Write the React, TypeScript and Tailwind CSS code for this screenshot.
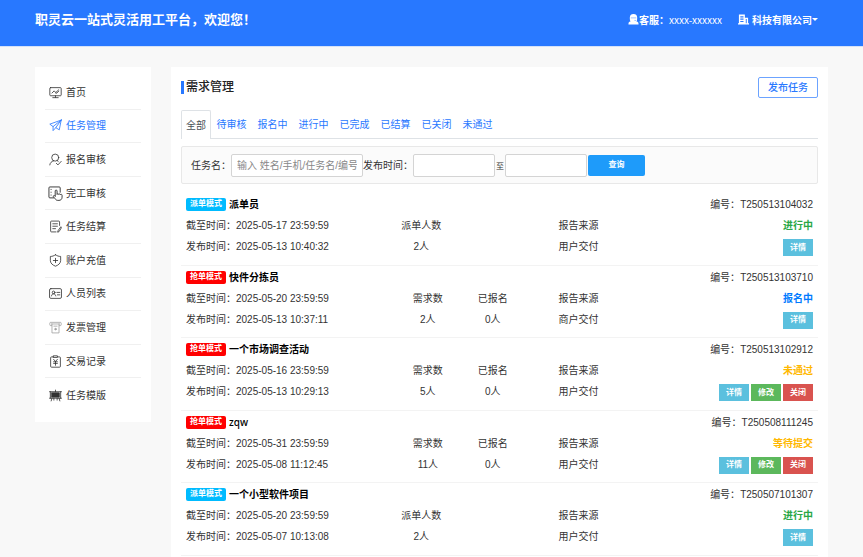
import type { ReactNode } from 'react';

function Icon({ children, className = 'size-[13px]', box = '0 0 24 24' }: { children: ReactNode; className?: string; box?: string }) {
  return (
    <svg
      viewBox={box}
      className={`${className} shrink-0`}
      fill="none"
      stroke="currentColor"
      strokeWidth="1.5"
      strokeLinecap="round"
      strokeLinejoin="round"
      aria-hidden="true"
    >
      {children}
    </svg>
  );
}

const menu: { label: string; active?: boolean; icon: ReactNode }[] = [
  {
    label: '首页',
    icon: (
      <Icon>
        <rect x="1.5" y="3" width="21" height="15" rx="1.5" />
        <path d="M5.5 13l4-4 3 3 5.500-5M12 12.500l2 1 4-4M12 18v3M7 21.500h10" />
      </Icon>
    ),
  },
  {
    label: '任务管理',
    active: true,
    icon: (
      <Icon>
        <path d="M22.500 2L1.500 9.500l6 4.500L22.500 2zM22.500 2l-3.500 18-6.500-4L22.500 2zM7.500 14v7.500l5-5.500" />
      </Icon>
    ),
  },
  {
    label: '报名审核',
    icon: (
      <Icon>
        <circle cx="11.500" cy="8.500" r="6.500" />
        <path d="M8.500 14.500C4.500 15.500 2 18 1.500 22M15 14l2 1.500M13.500 19l3 3 6-6.500" />
      </Icon>
    ),
  },
  {
    label: '完工审核',
    icon: (
      <Icon className="size-[15px]">
        <path d="M9 19H3A1.500 1.500 0 0 1 1.500 17.500V3A1.500 1.500 0 0 1 3 1.500h15A1.500 1.500 0 0 1 19.500 3v7" />
        <path d="M4.500 5.500h1M4.500 10h1M4.500 14.500h1" strokeWidth="1" />
        <path d="M11.500 16V8a1.500 1.500 0 0 1 3 0v5.500c0-1.500 2.700-1.500 2.700 0 0-1.200 2.700-1 2.700.5 0-1.200 2.600-1 2.600.8V18c0 3-2 5-5 5h-2c-2 0-3-1-4-2.500L8.500 17c-.6-1.600 1.500-2.500 3-1z" />
      </Icon>
    ),
  },
  {
    label: '任务结算',
    icon: (
      <Icon>
        <path d="M19.500 10V3.500A1.500 1.500 0 0 0 18 2H4.500A1.500 1.500 0 0 0 3 3.500v17A1.500 1.500 0 0 0 4.500 22H13" />
        <path d="M7 7h8.500M7 11.500h8.500M7 16h5M21.500 13l-5 7-.5 2.500 2.500-1 4-6.500z" />
      </Icon>
    ),
  },
  {
    label: '账户充值',
    icon: (
      <Icon>
        <path d="M12 1.500c3 2 6 3 9.500 3V12c0 5-4 8.500-9.500 10.500C6.500 20.500 2.500 17 2.500 12V4.500c3.500 0 6.500-1 9.500-3zM12 8v8M8 12h8" />
      </Icon>
    ),
  },
  {
    label: '人员列表',
    icon: (
      <Icon>
        <rect x="1" y="3" width="22" height="18" rx="2.500" />
        <circle cx="8.500" cy="10" r="2.500" />
        <path d="M4.500 16.500c.5-2.500 2-4 4-4s3.500 1.500 4 4M14.500 10H20M15.500 14.500H20" />
      </Icon>
    ),
  },
  {
    label: '发票管理',
    icon: (
      <span className="text-neutral-400">
        <Icon>
          <path d="M5 8.500H3A1.500 1.500 0 0 1 1.500 7V4A1.500 1.500 0 0 1 3 2.500h18A1.500 1.500 0 0 1 22.500 4v3A1.500 1.500 0 0 1 21 8.500h-2M4.500 5.500h15M5.500 5.500V22h13V5.500M9 9.500h6" />
          <circle cx="12" cy="15" r="1.500" fill="currentColor" />
        </Icon>
      </span>
    ),
  },
  {
    label: '交易记录',
    icon: (
      <Icon>
        <path d="M8 3.500H4.500A1.500 1.500 0 0 0 3 5v16a1.500 1.500 0 0 0 1.500 1.500h15A1.500 1.500 0 0 0 21 21V5a1.500 1.500 0 0 0-1.500-1.500H16M8.500 1.500h7v3h-7zM8.500 8L12 12l3.500-4M12 12v7M8.500 12.500h7M8.500 15.500h7" />
      </Icon>
    ),
  },
  {
    label: '任务模版',
    icon: (
      <Icon>
        <path d="M1 5h22M1 17h22M2.500 5v12M21.500 5v12M12 2v3M5.500 17L4 22M18.500 17l1.500 5M9 17v3.500M15 17v3.500" />
        <rect x="5" y="7" width="14" height="8" fill="currentColor" />
      </Icon>
    ),
  },
];

const tabs = ['待审核', '报名中', '进行中', '已完成', '已结算', '已关闭', '未通过'];

type Task = {
  mode: 'dispatch' | 'grab';
  title: string;
  deadline: string;
  published: string;
  count: string;
  source: string;
  id: string;
  status: '进行中' | '报名中' | '未通过' | '等待提交';
  editable?: boolean;
};

const tasks: Task[] = [
  { mode: 'dispatch', title: '派单员', deadline: '2025-05-17 23:59:59', published: '2025-05-13 10:40:32', count: '2人', source: '用户交付', id: 'T250513104032', status: '进行中' },
  { mode: 'grab', title: '快件分拣员', deadline: '2025-05-20 23:59:59', published: '2025-05-13 10:37:11', count: '2人', source: '商户交付', id: 'T250513103710', status: '报名中' },
  { mode: 'grab', title: '一个市场调查活动', deadline: '2025-05-16 23:59:59', published: '2025-05-13 10:29:13', count: '5人', source: '用户交付', id: 'T250513102912', status: '未通过', editable: true },
  { mode: 'grab', title: 'zqw', deadline: '2025-05-31 23:59:59', published: '2025-05-08 11:12:45', count: '11人', source: '用户交付', id: 'T250508111245', status: '等待提交', editable: true },
  { mode: 'dispatch', title: '一个小型软件项目', deadline: '2025-05-20 23:59:59', published: '2025-05-07 10:13:08', count: '2人', source: '用户交付', id: 'T250507101307', status: '进行中' },
];

const statusColor = {
  进行中: 'text-[#28a745]',
  报名中: 'text-[#007bff]',
  未通过: 'text-[#ffb800]',
  等待提交: 'text-[#ffb800]',
};

function Action({ label, color }: { label: string; color: string }) {
  return <button type="button" className={`h-[17px] w-[30px] text-[8px] leading-4 font-bold text-white ${color}`}>{label}</button>;
}

function Pair({ label, value, className = '' }: { label: string; value: string; className?: string }) {
  return (
    <dl className={className}>
      <dt>{label}</dt>
      <dd>{value}</dd>
    </dl>
  );
}

function TaskRow({ task }: { task: Task }) {
  const dispatch = task.mode === 'dispatch';
  const latinTitle = /^[a-z]+$/i.test(task.title);
  return (
    <li className="grid grid-cols-[209fr_163fr_254fr] border-b border-[#f3f3f3] px-[5px] pt-px leading-[21px]">
      <div className="whitespace-nowrap">
        <div className="flex h-[21px] items-center gap-[3px]">
          <span className={`h-[13px] w-[40px] rounded-xs text-center text-[8px] leading-3 font-bold text-white ${dispatch ? 'bg-[#0bf]' : 'bg-[#f00]'}`}>
            {dispatch ? '派单模式' : '抢单模式'}
          </span>
          <h3 className={`text-black ${latinTitle ? "font-['Noto_Sans',sans-serif] font-medium" : 'font-bold'}`}>{task.title}</h3>
        </div>
        <p>截至时间：{task.deadline}</p>
        <p>发布时间：{task.published}</p>
      </div>
      <div className="flex pt-[21px] text-center">
        {dispatch ? (
          <Pair label="派单人数" value={task.count} className="w-[52px]" />
        ) : (
          <>
            <Pair label="需求数" value={task.count} className="w-[65px]" />
            <Pair label="已报名" value="0人" className="w-[65px]" />
          </>
        )}
      </div>
      <div className="flex justify-between">
        <Pair label="报告来源" value={task.source} className="w-[40px] pt-[21px]" />
        <div className="text-right">
          <p>编号：{task.id}</p>
          <p className={`font-bold ${statusColor[task.status]}`}>{task.status}</p>
          <div className="flex justify-end gap-[2px] pt-[3px]">
            <Action label="详情" color="bg-[#5bc0de]" />
            {task.editable && (
              <>
                <Action label="修改" color="bg-[#5cb85c]" />
                <Action label="关闭" color="bg-[#d9534f]" />
              </>
            )}
          </div>
        </div>
      </div>
    </li>
  );
}

export default function App() {
  const field = 'h-[23px] rounded-xs border border-[#d4d4d4] bg-white';
  return (
    <div className="flex min-h-screen flex-col bg-[#f8f8f8] font-['Liberation_Sans','Noto_Sans_CJK_SC',sans-serif] text-[10px] text-[#333]">
      <header className="flex h-[47px] items-start justify-between border-b border-[#d5e2f8] bg-[#2878ff] pr-[45px] pl-[35px] pt-[7px] font-['Noto_Sans_CJK_SC',sans-serif] text-white">
        <h1 className="text-[13px] leading-6 font-bold">职灵云一站式灵活用工平台，欢迎您！</h1>
        <div className="flex h-6 items-center gap-4 font-bold">
          <div className="flex items-center">
            <svg viewBox="0 0 24 24" className="size-[11px]" fill="currentColor" aria-hidden="true">
              <path d="M12 0a8 8 0 0 1 8 7v4a8 8 0 0 1-16 0V7a8 8 0 0 1 8-7zM1 22c0-4 2-6 6-6 3 2.500 7 2.500 10 0 4 0 6 2 6 6v1H1z" />
              <path d="M6 8.500h12M14 14h3.500" stroke="#2878ff" strokeWidth="1" />
            </svg>
            <span>客服：<span className="font-normal">xxxx-xxxxxx</span></span>
          </div>
          <button type="button" className="flex items-center">
            <svg viewBox="0 0 24 24" className="mr-[3px] size-[11px]" fill="currentColor" aria-hidden="true">
              <path fillRule="evenodd" d="M2 1h13v7h7v12h2v3H0v-3h2zM5 5v2.500h7V5zM5 10v2.500h7V10zM5 15v2.500h7V15zM17 11v9h2v-9z" />
            </svg>
            科技有限公司
            <span className="border-x-[3px] border-t-[3px] border-x-transparent border-t-white" />
          </button>
        </div>
      </header>

      <div className="flex flex-1 items-stretch gap-5 px-[35px] pt-5">
        <nav className="w-[116px] shrink-0 self-start bg-white px-[10px] pt-[9px] pb-[10px]">
          <ul className="grid h-84 grid-rows-10">
            {menu.map((item) => (
              <li key={item.label} className="border-b border-[#f0f0f0] last:border-b-0">
                <a href="#" className={`flex h-full items-center gap-1 pl-1 ${item.active ? 'text-[#2878ff]' : 'text-[#333]'}`}>
                  <span className="flex w-[13px] shrink-0 items-center justify-center">{item.icon}</span>
                  {item.label}
                </a>
              </li>
            ))}
          </ul>
        </nav>

        <main className="min-w-0 flex-1 bg-white px-[10px] pt-[9px]">
          <div className="flex h-[22px] items-center justify-between">
            <h2 className="flex items-center gap-[2px] text-[12px] leading-5 font-medium text-[#222]">
              <span className="h-[13px] w-[3px] bg-[#2878ff]" />
              需求管理
            </h2>
            <button type="button" className="h-[21px] w-[60px] rounded-xs border border-[#6ca3ff] font-medium text-[#2878ff]">发布任务</button>
          </div>

          <div className="mt-3 flex h-[29px] border-b border-[#dee2e6]" role="tablist">
            <button type="button" role="tab" aria-selected="true" className="-mb-px w-[30px] rounded-t-xs border border-b-0 border-[#dee2e6] bg-white text-[#495057]">全部</button>
            {tabs.map((tab) => (
              <button key={tab} type="button" role="tab" aria-selected="false" className="w-[41px] whitespace-nowrap text-[#2878ff]">{tab}</button>
            ))}
          </div>

          <form className="mt-[7px] flex h-[38px] items-center rounded-xs border border-[#e8e8e8] bg-[#fbfbfb] pl-[9px]">
            <label htmlFor="task-name" className="shrink-0">任务名：</label>
            <input id="task-name" type="text" placeholder="输入 姓名/手机/任务名/编号" className={`${field} w-[132px] px-[5px] placeholder:text-[#888]`} />
            <label htmlFor="date-from" className="shrink-0">发布时间：</label>
            <input id="date-from" type="text" className={`${field} w-[82px]`} />
            <label htmlFor="date-to" className="mx-px shrink-0 pt-1 text-[8px]">至</label>
            <input id="date-to" type="text" className={`${field} w-[82px]`} />
            <button type="button" className="ml-px h-[21px] w-[57px] rounded-xs bg-[#1e9bfa] text-[8px] font-bold text-white">查询</button>
          </form>

          <ul className="mt-[9px] grid h-[363px] grid-rows-5">
            {tasks.map((task) => (
              <TaskRow key={task.id} task={task} />
            ))}
          </ul>
        </main>
      </div>
    </div>
  );
}
